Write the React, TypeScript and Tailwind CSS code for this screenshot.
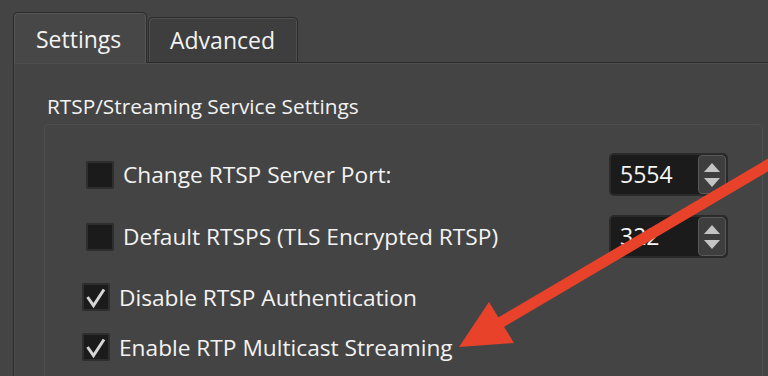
import React from "react";

function Box({ checked }: { checked?: boolean }) {
  return (
    <div className="h-[28px] w-[28px] shrink-0 rounded-[2px] border-2 border-[#2e2e2e] bg-[#1b1b1b] flex items-center justify-center">
      {checked ? (
        <svg width="24" height="24" viewBox="0 0 24 24" className="block">
          <path d="M3.5 12 L9.5 20.5 L20 4.5" fill="none" stroke="#d6d6d6" strokeWidth="3" />
        </svg>
      ) : null}
    </div>
  );
}

function Spin({ value }: { value: string }) {
  return (
    <div className="flex h-[43px] w-[119px] shrink-0 rounded-[5px] border-2 border-[#2a2a2a] bg-[#1b1b1b]">
      <div className="flex flex-1 items-center pl-[9px] text-[23px] leading-[31px] text-[#f5f5f5]">{value}</div>
      <div className="flex w-[28px] flex-col items-center justify-center gap-[6px] rounded-[4px] border border-[#585858] bg-[#3e3e3e]">
        <svg width="16" height="9" viewBox="0 0 16 9" className="block">
          <polygon points="8,0 16,9 0,9" fill="#c4c4c4" />
        </svg>
        <svg width="16" height="9" viewBox="0 0 16 9" className="block">
          <polygon points="0,0 16,0 8,9" fill="#c4c4c4" />
        </svg>
      </div>
    </div>
  );
}

export default function App() {
  return (
    <div className="relative h-[376px] w-[768px] overflow-hidden bg-[#444444] font-['Open_Sans',sans-serif] text-[#f3f3f3]">
      <div className="pl-[13px] pt-[12px]">
        <div className="flex items-end">
          <div className="relative z-10 -mb-px h-[51px] w-[134px] rounded-t-[5px] border border-b-0 border-[#2b2b2b] bg-[#474747] pl-[22px] pt-[11px] text-[23px] leading-[31px] shadow-[inset_1px_1px_0_#565656,inset_-1px_0_0_#565656]">
            Settings
          </div>
          <div className="ml-px h-[45px] w-[150px] rounded-t-[5px] border border-b-0 border-[#2b2b2b] bg-[#3e3e3e] pl-[21px] pt-[7px] text-[23px] leading-[31px] shadow-[inset_1px_1px_0_#505050,inset_-1px_0_0_#505050]">
            Advanced
          </div>
        </div>
        <div className="h-[330px] border-l border-t border-[#2b2b2b] shadow-[inset_1px_1px_0_#4e4e4e]">
          <div className="pl-[33px] pt-[28px] text-[20.8px] leading-[30px]">RTSP/Streaming Service Settings</div>
          <div className="ml-[30px] mt-[3px] h-[300px] w-[719px] rounded-[4px] border border-[#4d4d4d] pt-[28px] pr-[34px]">
            <div className="flex h-[43px] items-center pl-[41px]">
              <div className="flex flex-1 items-center gap-[9px]">
                <Box />
                <span className="text-[22.7px] leading-[31px]">Change RTSP Server Port:</span>
              </div>
              <Spin value="5554" />
            </div>
            <div className="mt-[19px] flex h-[43px] items-center pl-[41px]">
              <div className="flex flex-1 items-center gap-[9px]">
                <Box />
                <span className="text-[22.7px] leading-[31px]">Default RTSPS (TLS Encrypted RTSP)</span>
              </div>
              <Spin value="322" />
            </div>
            <div className="mt-[25px] flex h-[28px] items-center gap-[9px] pl-[37px]">
              <Box checked />
              <span className="text-[22.7px] leading-[31px]">Disable RTSP Authentication</span>
            </div>
            <div className="mt-[22px] flex h-[28px] items-center gap-[9px] pl-[37px]">
              <Box checked />
              <span className="text-[22.7px] leading-[31px]">Enable RTP Multicast Streaming</span>
            </div>
          </div>
        </div>
      </div>
      <svg className="pointer-events-none absolute inset-0" width="768" height="376" viewBox="0 0 768 376">
        <line x1="790" y1="152" x2="498" y2="324" stroke="#e8432a" strokeWidth="11" />
        <polygon points="459,347 489,302 514,343" fill="#e8432a" />
      </svg>
    </div>
  );
}
